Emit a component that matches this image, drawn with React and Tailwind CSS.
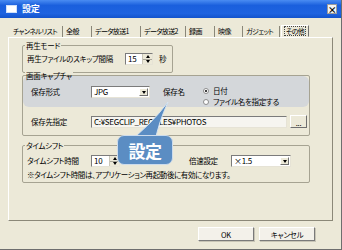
import React from "react";

const Spin = ({ value, w }) => (
  <div className={`flex h-[12px] border border-[#7b7b7b] border-r-[#e6e3d6] border-b-[#e6e3d6] bg-white ${w}`}>
    <span className="flex-1 pl-[2px] text-[8px] leading-[10px]">{value}</span>
    <div className="flex w-[10px] flex-col border-l border-[#c9c6b8] bg-[#ece9d8]">
      <div className="flex flex-1 items-center justify-center border-b border-[#a9a69a]">
        <div className="h-0 w-0 border-x-[2.5px] border-b-[3px] border-x-transparent border-b-black" />
      </div>
      <div className="flex flex-1 items-center justify-center">
        <div className="h-0 w-0 border-x-[2.5px] border-t-[3px] border-x-transparent border-t-black" />
      </div>
    </div>
  </div>
);

const Combo = ({ value, w }) => (
  <div className={`flex h-[12px] items-stretch border border-[#7b7b7b] border-r-[#e6e3d6] border-b-[#e6e3d6] bg-white ${w}`}>
    <span className="flex-1 pl-[2px] text-[8px] leading-[10px]">{value}</span>
    <div className="m-[1px] flex w-[9px] items-center justify-center border border-[#fff] border-r-[#6f6f6f] border-b-[#6f6f6f] bg-[#ece9d8]">
      <div className="h-0 w-0 border-x-[2.5px] border-t-[3px] border-x-transparent border-t-black" />
    </div>
  </div>
);

const Radio = ({ on, label }) => (
  <div className="flex h-[11px] items-center gap-[4px]">
    <div className="flex h-[6px] w-[6px] items-center justify-center rounded-full border border-[#8c8c8c] bg-white">
      {on && <div className="h-[2px] w-[2px] rounded-full bg-black" />}
    </div>
    <span>{label}</span>
  </div>
);

const Group = ({ label, className, labelClass = "bg-[#ece9d8]", children }) => (
  <div className={`relative rounded-[2px] border border-[#a6a392] ${className}`}>
    <span className={`absolute -top-[5px] left-[2px] z-10 px-[1px] leading-[9px] ${labelClass}`}>{label}</span>
    {children}
  </div>
);

const tabs = [
  ["チャンネルリスト", "w-[53px]"],
  ["全般", "w-[29px]"],
  ["データ放送1", "w-[49px]"],
  ["データ放送2", "w-[45px]"],
  ["録画", "w-[29px]"],
  ["映像", "w-[28px]"],
  ["ガジェット", "w-[37px]"],
];

export default function App() {
  return (
    <div className="relative h-[250px] w-[342px] overflow-hidden whitespace-nowrap border-r border-b border-[#6e6e6e] bg-[#ece9d8] font-['Noto_Sans_CJK_JP','Noto_Sans',sans-serif] text-[7.5px] tracking-[-0.3px] text-black [font-feature-settings:'palt']">
      {/* title bar */}
      <div className="flex h-[18px] items-center bg-[linear-gradient(#4a8cf2,#1a5fdd_30%,#1e63e0_75%,#1353cc)] pl-[6px] pr-[4px]">
        <div className="h-[8px] w-[11px] border border-[#cfe0fb] bg-white" />
        <span className="ml-[5px] text-[9px] font-bold leading-[10px] text-white">設定</span>
        <div className="ml-auto flex h-[10px] w-[10px] items-center justify-center border border-[#9c9c9c] bg-[#f4f4f4] text-[9px] font-bold leading-none">
          ×
        </div>
      </div>

      {/* tabs */}
      <div className="ml-[10px] mt-[7px] flex h-[12px] items-end text-[7px] tracking-[-0.6px]">
        {tabs.map(([t, w]) => (
          <div key={t} className={`flex h-[11px] shrink-0 items-center border-r border-[#8a8779] pl-[3px] leading-[9px] ${w}`}>
            {t}
          </div>
        ))}
        <div className="ml-[1px] flex h-[12px] w-[28px] shrink-0 items-center justify-center border border-[#fff] border-r-[#6f6f6f] border-b-transparent">
          <span className="border border-dotted border-[#444] px-[1px] leading-[8px]">その他</span>
        </div>
      </div>

      {/* panel */}
      <div className="ml-[8px] h-[184px] w-[325px] border border-[#fff] border-r-[#8b8878] border-b-[#8b8878] pl-[13px]">
        <Group label="再生モード" className="mt-[7px] h-[28px] w-[151px]">
          <div className="flex items-center pl-[4px] pt-[7px]">
            <span className="w-[98px] leading-[12px]">再生ファイルのスキップ間隔</span>
            <Spin value="15" w="w-[28px]" />
            <span className="ml-[6px]">秒</span>
          </div>
        </Group>

        <Group
          label="画面キャプチャ"
          className="mt-[2px] h-[61px] w-[288px]"
          labelClass="bg-[linear-gradient(#ece9d8_50%,transparent_50%)]"
        >
          <div className="h-[31px] rounded-[6px] bg-[#d4d7da]">
            <div className="flex items-start pl-[8px] pt-[10px]">
              <span className="w-[60px] leading-[12px]">保存形式</span>
              <Combo value="JPG" w="w-[59px]" />
              <span className="ml-[13px] w-[40px] leading-[12px]">保存名</span>
              <div className="-mt-[1px] flex flex-col">
                <Radio on label="日付" />
                <Radio label="ファイル名を指定する" />
              </div>
            </div>
          </div>
          <div className="mt-[8px] flex items-center pl-[8px]">
            <span className="w-[60px]">保存先指定</span>
            <div className="flex h-[12px] w-[196px] items-center border border-[#7b7b7b] border-r-[#e6e3d6] border-b-[#e6e3d6] bg-[#f6f5f0] pl-[2px] text-[8px] tracking-[-0.3px]">
              C:¥SEGCLIP_RECFILES¥PHOTOS
            </div>
            <div className="ml-[3px] flex h-[13px] w-[17px] items-end justify-center border border-[#fff] border-r-[#6f6f6f] border-b-[#6f6f6f] bg-[#ece9d8] leading-[9px]">
              ...
            </div>
          </div>
        </Group>

        <Group label="タイムシフト" className="mt-[9px] h-[38px] w-[288px]">
          <div className="flex items-center pl-[4px] pt-[9px]">
            <span className="w-[64px]">タイムシフト時間</span>
            <Spin value="10" w="w-[29px]" />
            <span className="ml-[69px] w-[42px]">倍速設定</span>
            <Combo value="×1.5" w="w-[60px]" />
          </div>
          <div className="mt-[3px] pl-[4px] leading-[10px] tracking-[-0.4px]">
            ※タイムシフト時間は、アプリケーション再起動後に有効になります。
          </div>
        </Group>
      </div>

      {/* buttons */}
      <div className="mt-[6px] flex justify-end gap-[5px] pr-[26px]">
        {["OK", "キャンセル"].map((b) => (
          <div
            key={b}
            className="flex h-[14px] w-[56px] items-center justify-center border border-[#fff] border-r-[#7a7a7a] border-b-[#7a7a7a] bg-[#f3f1ea] shadow-[1px_1px_0_#c8c5b6] leading-[9px]"
          >
            {b}
          </div>
        ))}
      </div>

      {/* callout */}
      <svg className="absolute left-[120px] top-[100px] h-[46px] w-[52px]" viewBox="0 0 52 46">
        <path d="M7 43 Q30 26 48 2 Q38 24 35 42 Z" fill="#5b8dc3" stroke="#d6e4f1" strokeWidth="1" />
      </svg>
      <div className="absolute left-[117px] top-[135px] flex h-[30px] w-[56px] items-center justify-center rounded-[7px] border border-[#cddcec] bg-[#5b8dc3] text-[17px] font-bold leading-none tracking-[-0.5px] text-white">
        設定
      </div>
    </div>
  );
}
